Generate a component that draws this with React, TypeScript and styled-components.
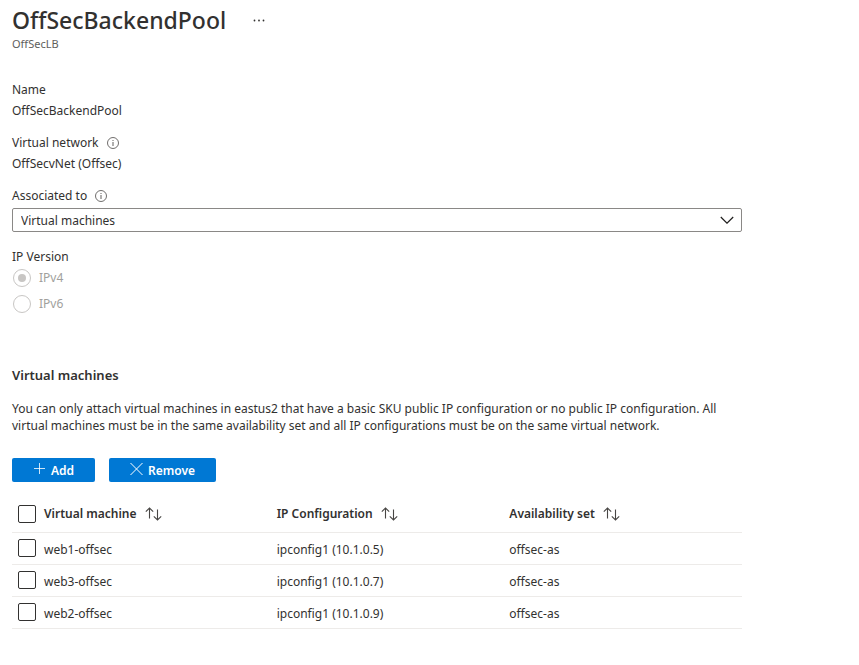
import React, { useState } from "react";
import styled, { createGlobalStyle, css } from "styled-components";

const GlobalStyle = createGlobalStyle`
  *, *::before, *::after { box-sizing: border-box; }
  body {
    margin: 0;
    background: #fff;
    color: #323130;
    font: 400 12px/21px "Segoe UI", "Noto Sans", "Open Sans", sans-serif;
  }
  button, select, input { font: inherit; color: inherit; }
`;

const Page = styled.main`
  max-width: 754px;
  padding: 4px 12px 24px;
`;

const TitleRow = styled.header`
  display: flex;
  align-items: center;
  gap: 24px;
`;

const Title = styled.h1`
  margin: 0;
  font-size: 23px;
  line-height: 32px;
  font-weight: 500;
`;

const MoreButton = styled.button`
  display: flex;
  padding: 2px;
  border: 0;
  background: none;
`;

const Subtitle = styled.p`
  margin: 0 0 27px;
  font-size: 11px;
  line-height: 16px;
  color: #605e5c;
`;

const Fields = styled.dl`
  margin: 0;
`;

const FieldLabel = styled.dt`
  display: flex;
  align-items: center;
  gap: 8px;
`;

const FieldValue = styled.dd`
  margin: 0 0 11px;
`;

const LabelRow = styled.div`
  display: flex;
  align-items: center;
  gap: 8px;
  margin-bottom: 2px;
`;

const InfoButton = styled.button`
  display: flex;
  padding: 0;
  border: 0;
  background: none;
  color: #605e5c;
`;

const SelectFrame = styled.div`
  display: grid;
  align-items: center;
  margin-bottom: 14px;

  > * { grid-area: 1 / 1; }
  > svg { justify-self: end; margin-right: 8px; pointer-events: none; }
`;

const Select = styled.select`
  appearance: none;
  width: 100%;
  height: 24px;
  padding: 0 32px 0 8px;
  border: 1px solid #8a8886;
  border-radius: 2px;
  background: #fff;
`;

const RadioGroup = styled.fieldset`
  display: flex;
  flex-direction: column;
  gap: 5px;
  margin: 0 0 51px;
  padding: 0;
  border: 0;
`;

const Legend = styled.legend`
  padding: 0;
`;

const RadioLabel = styled.label`
  display: flex;
  align-items: center;
  gap: 8px;
  padding-left: 1px;
  color: #a19f9d;
`;

const Radio = styled.input.attrs({ type: "radio" })`
  appearance: none;
  display: grid;
  place-items: center;
  width: 18px;
  height: 18px;
  margin: 0;
  border: 1px solid #c8c6c4;
  border-radius: 50%;

  &:checked::before {
    content: "";
    width: 8px;
    height: 8px;
    border-radius: 50%;
    background: #c8c6c4;
  }
`;

const SectionTitle = styled.h2`
  margin: 0 0 14px;
  font-size: 13px;
  line-height: 21px;
  font-weight: 600;
`;

const Description = styled.p`
  margin: 0 0 24px;
  line-height: 17px;
`;

const Toolbar = styled.div`
  display: flex;
  gap: 14px;
  margin-bottom: 14px;
`;

const PrimaryButton = styled.button`
  display: flex;
  align-items: center;
  gap: 4px;
  height: 24px;
  padding: 0 21px;
  border: 0;
  border-radius: 2px;
  background: #0078d4;
  color: #fff;
  font-weight: 600;
`;

const Table = styled.table`
  width: 100%;
  table-layout: fixed;
  border-collapse: collapse;
`;

const cell = css`
  padding: 0;
  border-bottom: 1px solid #edebe9;
  text-align: left;
  vertical-align: middle;
`;

const HeadCell = styled.th<{ $narrow?: boolean }>`
  ${cell}
  width: ${(p) => (p.$narrow ? "32px" : "auto")};
  height: 36px;
  font-weight: 600;
`;

const Cell = styled.td`
  ${cell}
  height: 32px;
`;

const TextCell = styled(Cell)`
  padding-top: 2px;
`;

const SortButton = styled.button`
  display: flex;
  align-items: center;
  gap: 8px;
  padding: 0;
  border: 0;
  background: none;
`;

const Checkbox = styled.input.attrs({ type: "checkbox" })`
  appearance: none;
  display: block;
  width: 18px;
  height: 18px;
  margin: 0 0 0 6px;
  border: 1px solid #323130;
  border-radius: 2px;

  &:checked { background: #0078d4; border-color: #0078d4; }
`;

const InfoIcon = () => (
  <svg width="12" height="12" viewBox="0 0 12 12" fill="none" stroke="currentColor" aria-hidden="true">
    <circle cx="6" cy="6" r="5.5" strokeWidth=".9" />
    <path d="M6 5v4M6 3v1" />
  </svg>
);

const MoreIcon = () => (
  <svg width="14" height="14" viewBox="0 0 14 14" fill="#323130" aria-hidden="true">
    <circle cx="2.5" cy="7.5" r=".9" />
    <circle cx="7" cy="7.5" r=".9" />
    <circle cx="11.5" cy="7.5" r=".9" />
  </svg>
);

const ChevronIcon = () => (
  <svg width="14" height="8" viewBox="0 0 14 8" fill="none" stroke="#201f1e" strokeWidth="1.2" aria-hidden="true">
    <path d="M.8 1 7 7.2 13.2 1" />
  </svg>
);

const PlusIcon = () => (
  <svg width="14" height="14" viewBox="0 0 14 14" fill="none" stroke="currentColor" strokeOpacity=".8" aria-hidden="true">
    <path d="M6.5 0v11M1 5.5h11" />
  </svg>
);

const CrossIcon = () => (
  <svg width="14" height="14" viewBox="0 0 14 14" fill="none" stroke="currentColor" aria-hidden="true">
    <path d="m.5 0 12 12M12.5 0 .5 12" />
  </svg>
);

const SortIcon = () => (
  <svg width="17" height="14" viewBox="0 0 17 14" fill="none" stroke="#484644" strokeWidth="1.1" aria-hidden="true">
    <path d="M4.5 11.5V1M.8 4.7 4.5 1l3.7 3.7M12.5 2.5V13M8.8 9.3l3.7 3.7 3.7-3.7" />
  </svg>
);

const columns = ["Virtual machine", "IP Configuration", "Availability set"];

const machines = [
  { name: "web1-offsec", ip: "ipconfig1 (10.1.0.5)", set: "offsec-as" },
  { name: "web3-offsec", ip: "ipconfig1 (10.1.0.7)", set: "offsec-as" },
  { name: "web2-offsec", ip: "ipconfig1 (10.1.0.9)", set: "offsec-as" },
];

export default function App() {
  const [selected, setSelected] = useState<string[]>([]);
  const allSelected = selected.length === machines.length;
  const toggle = (name: string) =>
    setSelected((s) => (s.includes(name) ? s.filter((n) => n !== name) : [...s, name]));

  return (
    <>
      <GlobalStyle />
      <Page>
        <TitleRow>
          <Title>OffSecBackendPool</Title>
          <MoreButton aria-label="More actions"><MoreIcon /></MoreButton>
        </TitleRow>
        <Subtitle>OffSecLB</Subtitle>

        <Fields>
          <FieldLabel>Name</FieldLabel>
          <FieldValue>OffSecBackendPool</FieldValue>
          <FieldLabel>
            Virtual network
            <InfoButton aria-label="About virtual network"><InfoIcon /></InfoButton>
          </FieldLabel>
          <FieldValue>OffSecvNet (Offsec)</FieldValue>
        </Fields>

        <LabelRow>
          <label htmlFor="associated">Associated to</label>
          <InfoButton aria-label="About association"><InfoIcon /></InfoButton>
        </LabelRow>
        <SelectFrame>
          <Select id="associated">
            <option>Virtual machines</option>
          </Select>
          <ChevronIcon />
        </SelectFrame>

        <RadioGroup disabled>
          <Legend>IP Version</Legend>
          <RadioLabel><Radio name="ip-version" defaultChecked />IPv4</RadioLabel>
          <RadioLabel><Radio name="ip-version" />IPv6</RadioLabel>
        </RadioGroup>

        <SectionTitle>Virtual machines</SectionTitle>
        <Description>
          You can only attach virtual machines in eastus2 that have a basic SKU public IP configuration or no
          public IP configuration. All virtual machines must be in the same availability set and all IP
          configurations must be on the same virtual network.
        </Description>

        <Toolbar>
          <PrimaryButton><PlusIcon />Add</PrimaryButton>
          <PrimaryButton><CrossIcon />Remove</PrimaryButton>
        </Toolbar>

        <Table>
          <thead>
            <tr>
              <HeadCell $narrow>
                <Checkbox
                  aria-label="Select all"
                  checked={allSelected}
                  onChange={() => setSelected(allSelected ? [] : machines.map((m) => m.name))}
                />
              </HeadCell>
              {columns.map((c) => (
                <HeadCell key={c} scope="col">
                  <SortButton>{c}<SortIcon /></SortButton>
                </HeadCell>
              ))}
            </tr>
          </thead>
          <tbody>
            {machines.map((m) => (
              <tr key={m.name}>
                <Cell>
                  <Checkbox
                    aria-label={`Select ${m.name}`}
                    checked={selected.includes(m.name)}
                    onChange={() => toggle(m.name)}
                  />
                </Cell>
                <TextCell>{m.name}</TextCell>
                <TextCell>{m.ip}</TextCell>
                <TextCell>{m.set}</TextCell>
              </tr>
            ))}
          </tbody>
        </Table>
      </Page>
    </>
  );
}
